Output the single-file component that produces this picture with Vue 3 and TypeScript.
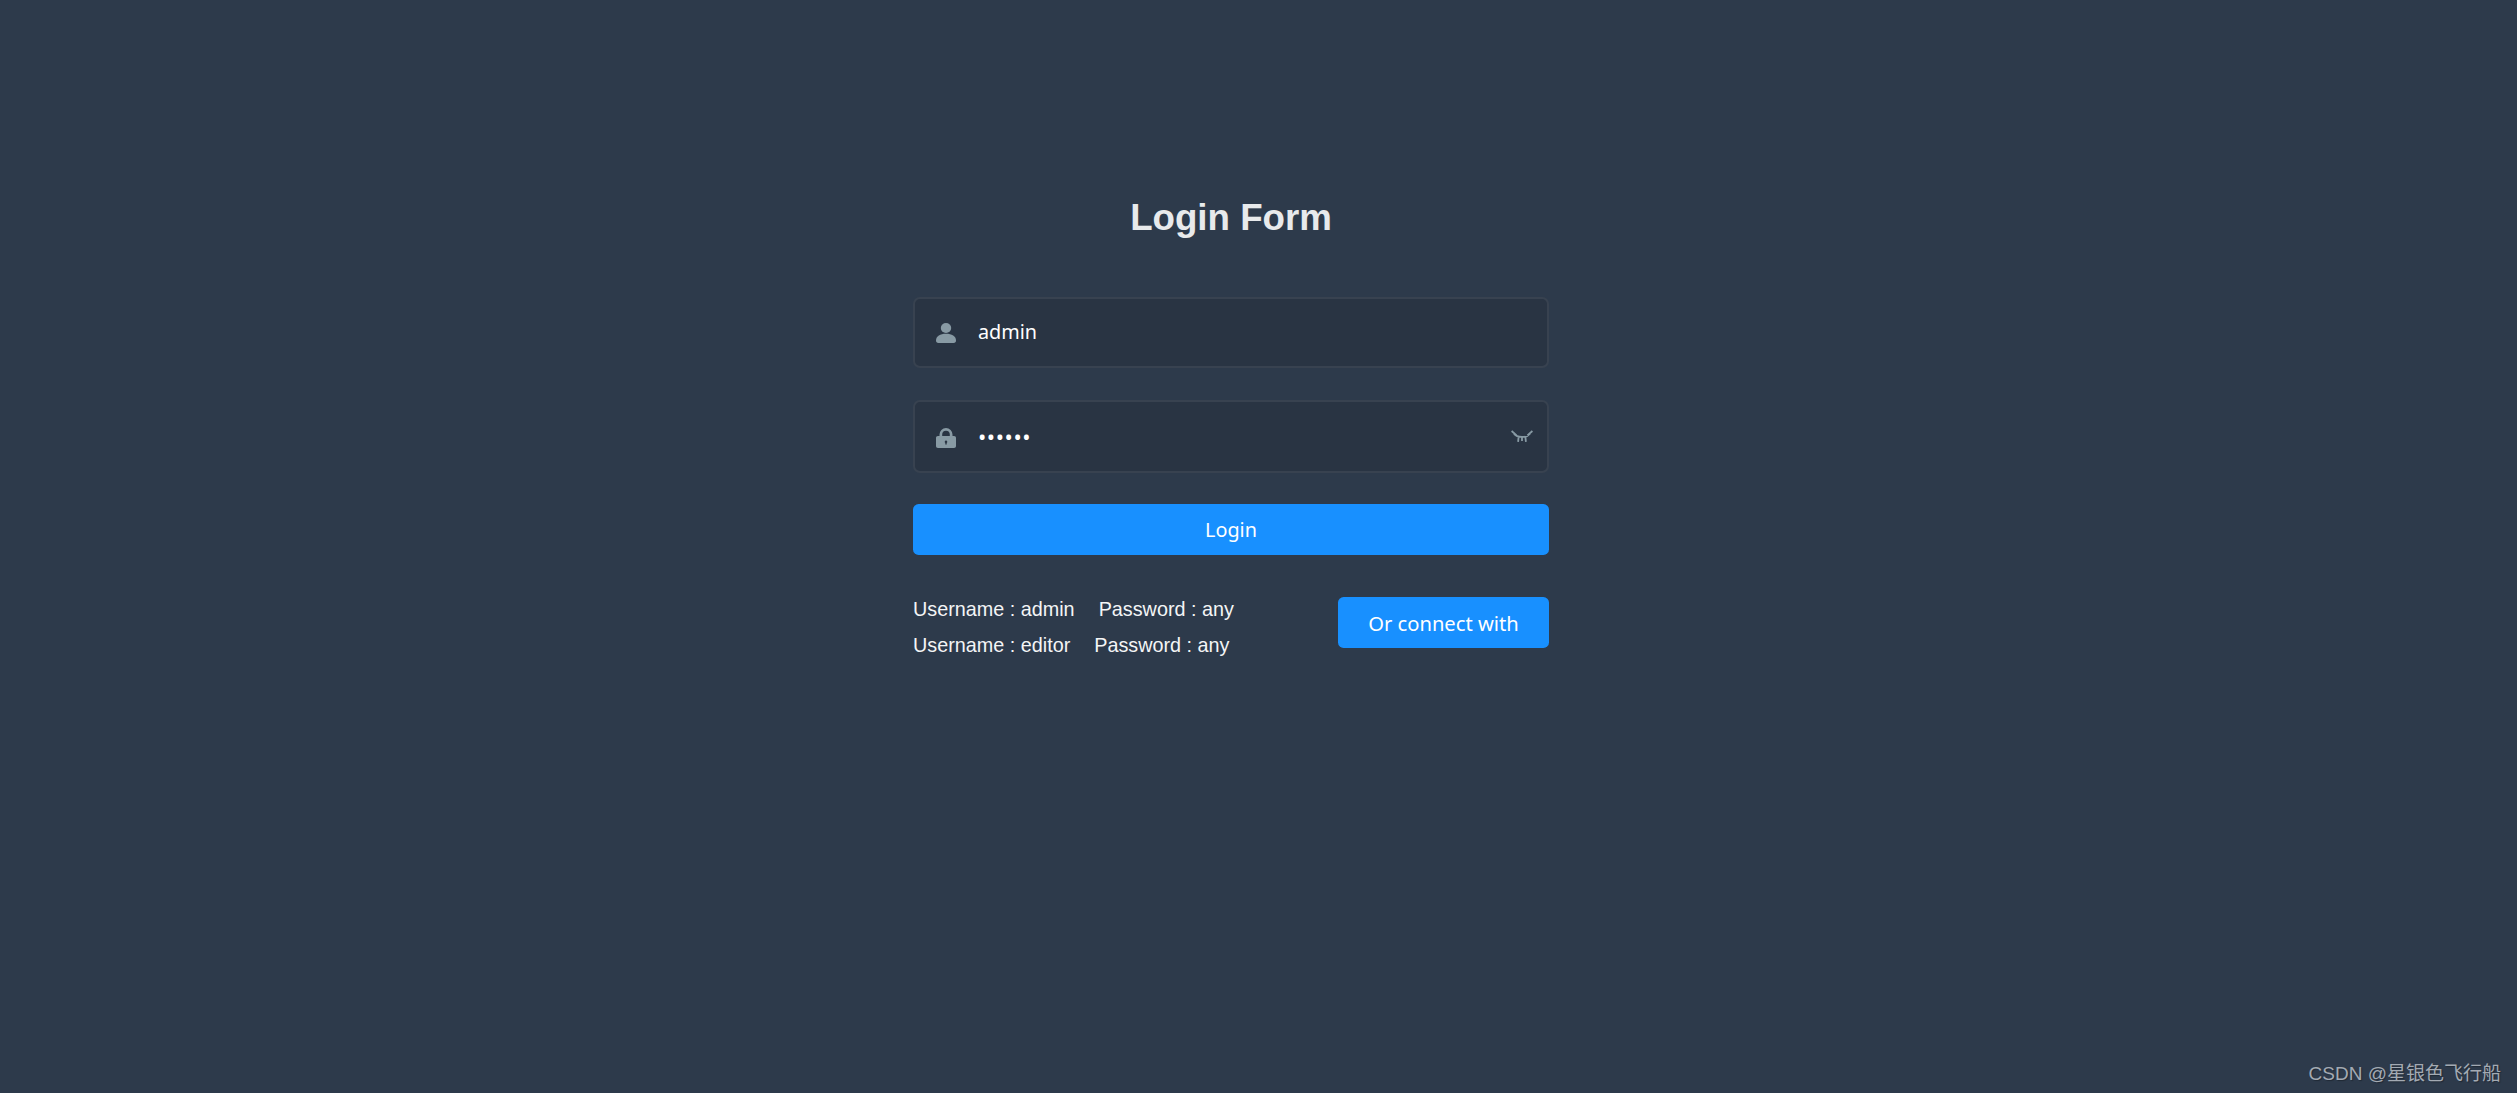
<script setup lang="ts">
const tips = [
  { user: 'Username : admin', pass: 'Password : any' },
  { user: 'Username : editor', pass: 'Password : any' },
]
</script>

<template>
  <div class="login-page">
    <form class="login-form" @submit.prevent>
      <h3 class="title">Login Form</h3>

      <div class="field field-user">
        <svg class="field-icon" viewBox="0 0 20 20" width="20" height="20">
          <ellipse cx="10" cy="5" rx="5.200" ry="5" />
          <path d="M0 17.500c0-4.300 4.200-6.700 10-6.700s10 2.400 10 6.700c0 1.600-.8 2.500-2.400 2.500H2.400C.8 20 0 19.100 0 17.500z" />
        </svg>
        <input class="field-input" type="text" value="admin" />
      </div>

      <div class="field field-pass">
        <svg class="field-icon lock-icon" viewBox="0 0 20 20" width="20" height="20">
          <path
            fill-rule="evenodd"
            d="M3.500 8V6.500a6.500 6.500 0 0 1 13 0V8H18c1.300 0 2 .7 2 2v8c0 1.300-.7 2-2 2H2c-1.300 0-2-.7-2-2v-8c0-1.300.7-2 2-2h1.500zM6.200 8h7.600V6.500a3.800 3.800 0 0 0-7.600 0V8zM10 12.600a1.300 1.300 0 0 0-.7 2.400v1.600h1.400V15a1.300 1.300 0 0 0-.7-2.400z"
          />
        </svg>
        <input class="field-input field-secret" type="password" value="111111" />
        <svg class="eye-icon" viewBox="0 0 22 12" width="22" height="12">
          <path d="M3 3.800C6 8 16 8 19 3.800M.6 1l5 4.400M21.400 1l-5 4.400M7.600 6.800l-.5 5M14.400 6.800l.5 5M11 7.400V11" />
        </svg>
      </div>

      <button class="btn btn-login" type="button">Login</button>

      <div class="tips-row">
        <div class="tips">
          <div v-for="tip in tips" :key="tip.user" class="tip-line">
            <span class="tip-user">{{ tip.user }}</span>
            <span>{{ tip.pass }}</span>
          </div>
        </div>
        <button class="btn btn-connect" type="button">Or connect with</button>
      </div>
    </form>

    <div class="watermark">CSDN @星银色飞行船</div>
  </div>
</template>

<style>
html,
body {
  margin: 0;
  background: #2d3a4b;
}
</style>

<style scoped>
.login-page {
  position: relative;
  box-sizing: border-box;
  height: 1093px;
  overflow: hidden;
  padding: 196px 0 0 913px;
  background: #2d3a4b;
  font-family: "Liberation Sans", Arial, sans-serif;
}

.login-form {
  width: 636px;
}

.title {
  margin: 0 0 57px;
  font-size: 36.7px;
  line-height: 44px;
  font-weight: 700;
  text-align: center;
  color: #e8eaec;
}

.field {
  box-sizing: border-box;
  display: flex;
  align-items: center;
  padding: 0 14px 0 21px;
  border: 2px solid rgba(255, 255, 255, 0.07);
  border-radius: 7px;
  background: #293443;
}

.field-user {
  height: 71px;
  margin-bottom: 32px;
}

.field-user .field-input {
  margin-bottom: 2px;
}

.field-pass {
  height: 73px;
  margin-bottom: 31px;
}

.field-icon {
  flex: none;
  fill: #889aa4;
}

.lock-icon {
  margin-top: 3px;
}

.field-input {
  flex: 1;
  min-width: 0;
  margin-left: 22px;
  padding: 0;
  border: 0;
  outline: 0;
  background: transparent;
  font-family: "Noto Sans", sans-serif;
  font-size: 19.8px;
  color: #ffffff;
}

.field-secret {
  margin-bottom: 2px;
  font-size: 22px;
  letter-spacing: 0.6px;
}

.eye-icon {
  flex: none;
  margin-top: -1px;
  fill: none;
  stroke: #889aa4;
  stroke-width: 1.8;
}

.btn {
  display: block;
  box-sizing: border-box;
  height: 51px;
  padding: 0;
  border: 0;
  border-radius: 5.6px;
  background: #1890ff;
  font-family: "Noto Sans", sans-serif;
  font-size: 19.8px;
  color: #ffffff;
}

.btn-login {
  width: 100%;
}

.tips-row {
  display: flex;
  justify-content: space-between;
  align-items: flex-start;
  margin-top: 36px;
}

.tips {
  font-size: 19.8px;
  line-height: 36px;
  color: #f4f5f6;
}

.tip-user {
  margin-right: 24px;
}

.btn-connect {
  width: 211px;
  margin-top: 6px;
  font-size: 20.2px;
}

.watermark {
  position: absolute;
  right: 16px;
  bottom: 7px;
  font-family: "Liberation Sans", "Noto Sans CJK SC", sans-serif;
  font-size: 19px;
  line-height: 24px;
  color: #a3aab3;
  text-shadow: 1px 1px 1px rgba(0, 0, 0, 0.3);
}
</style>
